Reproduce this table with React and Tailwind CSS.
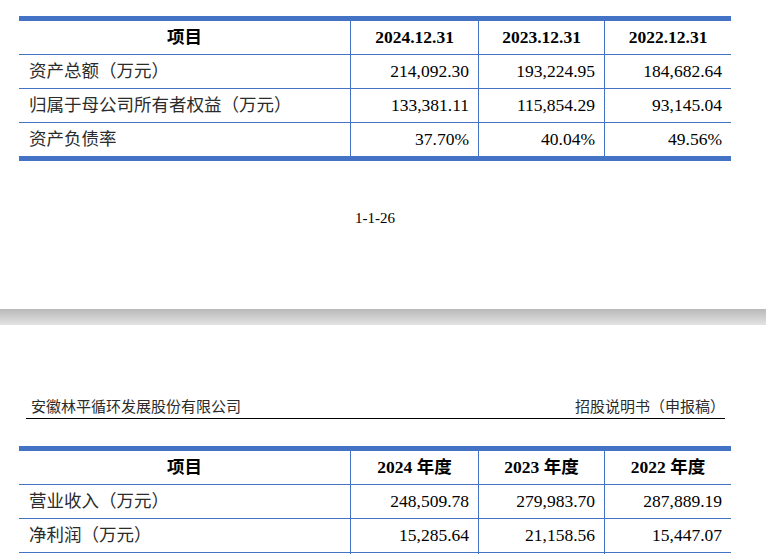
import React from "react";

const FONT = "font-['Liberation_Serif','Noto_Sans_CJK_SC',serif]";

const cols = "grid grid-cols-[331px_128px_126px_127px]";

function Table({ head, rows }) {
  return (
    <div className="ml-[19px] w-[712px] border-t-[5px] border-b-[5px] border-[#4472c4]">
      <div className={`${cols} h-[34px] border-b border-[#4472c4]`}>
        {head.map((h, i) => (
          <div
            key={i}
            className={`flex items-center justify-center font-bold text-[17.5px] text-black ${
              i > 0 ? "border-l border-[#4472c4]" : ""
            }`}
          >
            {h}
          </div>
        ))}
      </div>
      {rows.map((r, ri) => (
        <div
          key={ri}
          className={`${cols} ${
            ri < rows.length - 1 ? "h-[34px] border-b border-[#4472c4]" : "h-[33px]"
          }`}
        >
          <div className="flex items-center pl-[10px] text-[17.5px] text-[#2b2b2b]">{r[0]}</div>
          {r.slice(1).map((v, vi) => (
            <div
              key={vi}
              className="flex items-center justify-end pr-[9px] border-l border-[#4472c4] text-[17.5px] text-black"
            >
              {v}
            </div>
          ))}
        </div>
      ))}
    </div>
  );
}

export default function App() {
  return (
    <div className={`w-[766px] h-[554px] overflow-hidden bg-white ${FONT}`}>
      <div className="pt-[16px]">
        <Table
          head={["项目", "2024.12.31", "2023.12.31", "2022.12.31"]}
          rows={[
            ["资产总额（万元）", "214,092.30", "193,224.95", "184,682.64"],
            ["归属于母公司所有者权益（万元）", "133,381.11", "115,854.29", "93,145.04"],
            ["资产负债率", "37.70%", "40.04%", "49.56%"],
          ]}
        />
      </div>
      <div className="mt-[47px] ml-[19px] w-[712px] text-center text-[15px] leading-[20px] text-black">
        1-1-26
      </div>
      <div className="mt-[81px] h-[16px] bg-linear-to-b from-[#b9b9b9] to-[#e3e3e3]" />
      <div className="mt-[72px] ml-[26px] w-[699px] flex justify-between items-center pl-[5px] pb-[1px] border-b border-black text-[15px] leading-[20px] text-[#2b2b2b]">
        <span>安徽林平循环发展股份有限公司</span>
        <span>招股说明书（申报稿）</span>
      </div>
      <div className="mt-[27px]">
        <Table
          head={["项目", "2024 年度", "2023 年度", "2022 年度"]}
          rows={[
            ["营业收入（万元）", "248,509.78", "279,983.70", "287,889.19"],
            ["净利润（万元）", "15,285.64", "21,158.56", "15,447.07"],
            ["", "", "", ""],
          ]}
        />
      </div>
    </div>
  );
}
